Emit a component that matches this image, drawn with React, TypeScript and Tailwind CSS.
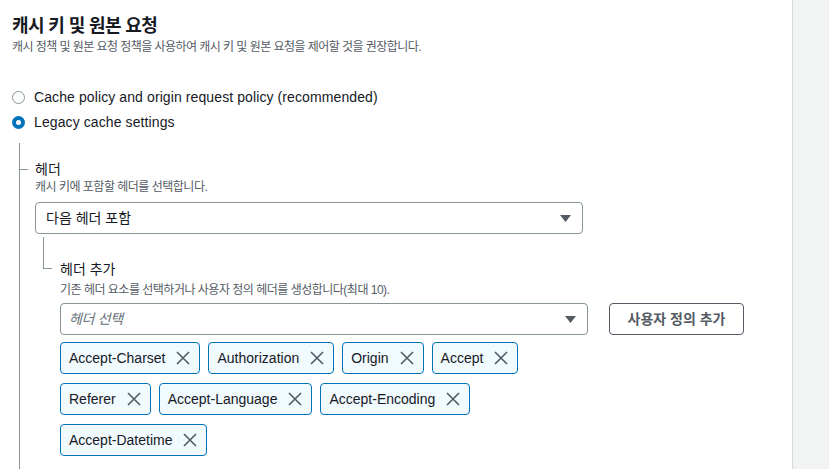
const tokens = [
  ["Accept-Charset", "Authorization", "Origin", "Accept"],
  ["Referer", "Accept-Language", "Accept-Encoding"],
  ["Accept-Datetime"],
]

function Caret() {
  return (
    <svg width="11" height="7" viewBox="0 0 11 7" className="shrink-0">
      <path d="M0 0h11L5.5 7z" fill="#545b64" />
    </svg>
  )
}

function CloseIcon() {
  return (
    <svg width="14" height="14" viewBox="0 0 14 14" className="shrink-0">
      <path d="M1 1l12 12M13 1L1 13" stroke="#545b64" strokeWidth="1.6" fill="none" />
    </svg>
  )
}

function Radio({ checked, label }: { checked?: boolean; label: string }) {
  return (
    <div className="flex h-5 items-center">
      {checked ? (
        <span className="flex h-[13px] w-[13px] items-center justify-center rounded-full bg-[#0073bb]">
          <span className="h-[5px] w-[5px] rounded-full bg-white" />
        </span>
      ) : (
        <span className="h-[13px] w-[13px] rounded-full border border-[#879596] bg-white" />
      )}
      <span className="ml-[9px] text-sm tracking-[0.1px] text-[#16191f]">{label}</span>
    </div>
  )
}

function Token({ label }: { label: string }) {
  return (
    <div className="flex h-8 items-center rounded-sm border border-[#0073bb] bg-[#f1faff] pl-2 pr-[9px]">
      <span className="text-sm text-[#16191f]">{label}</span>
      <span className="ml-[11px]">
        <CloseIcon />
      </span>
    </div>
  )
}

export default function App() {
  return (
    <div
      className="flex min-h-[469px] bg-white"
      style={{ fontFamily: '"Liberation Sans", "Noto Sans CJK KR", sans-serif' }}
    >
      <main className="w-[792px] shrink-0 pl-3 pt-[15px]">
        <h2 className="text-[18px] font-bold leading-[22px] tracking-[-0.6px] text-[#16191f]">
          캐시 키 및 원본 요청
        </h2>
        <p className="mt-[2px] text-xs leading-4 tracking-[-0.55px] text-[#545b64]">
          캐시 정책 및 원본 요청 정책을 사용하여 캐시 키 및 원본 요청을 제어할 것을 권장합니다.
        </p>

        <div className="mt-[32px] flex flex-col gap-[5px]">
          <Radio label="Cache policy and origin request policy (recommended)" />
          <Radio checked label="Legacy cache settings" />
        </div>

        <div className="ml-[7px] mt-[11px] border-l border-[#879596] pb-4 pt-4">
          <div className="flex items-center">
            <span className="h-px w-[8px] bg-[#879596]" />
            <span className="ml-[7px] text-sm leading-5 text-[#16191f]">헤더</span>
          </div>
          <div className="pl-[15px]">
            <p className="text-xs leading-4 tracking-[-0.5px] text-[#545b64]">캐시 키에 포함할 헤더를 선택합니다.</p>
            <div className="mt-[7px] flex h-8 w-[548px] items-center justify-between rounded-sm border border-[#879596] pl-[10px] pr-[11px]">
              <span className="text-sm text-[#16191f]">다음 헤더 포함</span>
              <Caret />
            </div>

            <div className="ml-2 mt-[3px] h-[32px] w-[9px] border-b border-l border-[#879596]" />
            <div className="-mt-[10px] pl-[25px]">
              <p className="text-sm leading-5 text-[#16191f]">헤더 추가</p>
              <p className="mt-[3px] text-xs leading-4 tracking-[-0.5px] text-[#545b64]">
                기존 헤더 요소를 선택하거나 사용자 정의 헤더를 생성합니다(최대 10).
              </p>
              <div className="mt-[5px] flex items-center gap-[21px]">
                <div className="flex h-8 w-[528px] items-center justify-between rounded-sm border border-[#879596] pl-2 pr-[11px]">
                  <span className="text-sm italic tracking-[-0.3px] text-[#687078]">헤더 선택</span>
                  <Caret />
                </div>
                <button className="h-8 w-[135px] rounded-sm border border-[#545b64] text-sm font-bold text-[#545b64]">
                  사용자 정의 추가
                </button>
              </div>
              <div className="mt-[7px] flex flex-col gap-y-[9px]">
                {tokens.map((row, i) => (
                  <div key={i} className="flex gap-2">
                    {row.map((t) => (
                      <Token key={t} label={t} />
                    ))}
                  </div>
                ))}
              </div>
            </div>
          </div>
        </div>
      </main>
      <aside className="flex-1 border-l border-[#d5dbdb] bg-[#f2f3f3]" />
    </div>
  )
}
